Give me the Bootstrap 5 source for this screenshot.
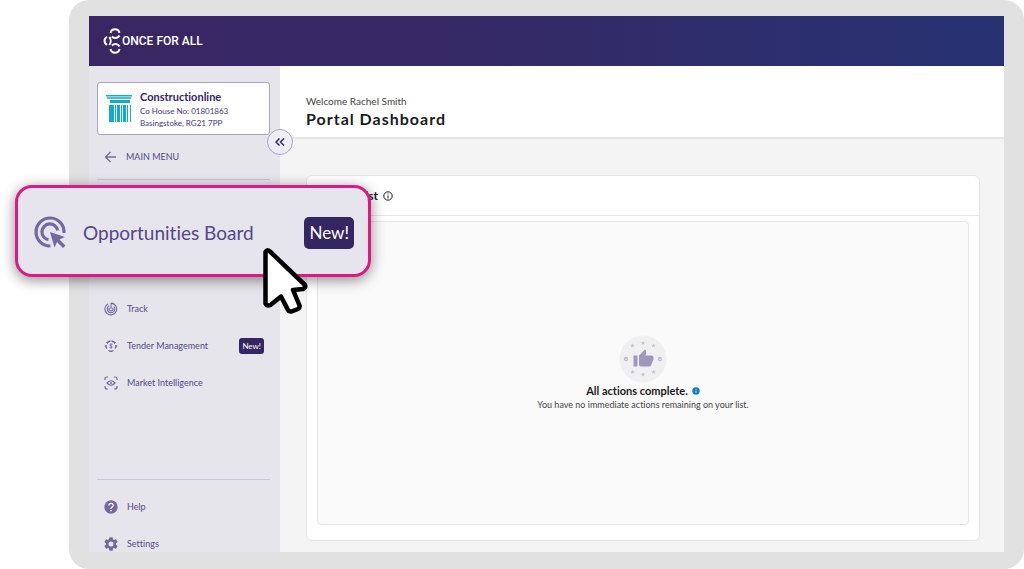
<!DOCTYPE html>
<html lang="en">
<head>
<meta charset="utf-8">
<meta name="viewport" content="width=device-width, initial-scale=1">
<title>Portal Dashboard</title>
<link href="https://cdn.jsdelivr.net/npm/bootstrap@5.3.0/dist/css/bootstrap.min.css" rel="stylesheet">
<style>
  :root { --ink: #352562; --violet: #55478a; --icon: #7568a0; --line: #e5e5e6; }
  body { font-family: Lato, "Open Sans", sans-serif; font-size: 10px; line-height: 12px; background: #fff; font-variant-ligatures: none; }
  svg { display: block; flex: none; }
  .stage { min-height: 100vh; padding-left: 69px; }
  .frame { background: #e1e1e1; border-radius: 20px; padding: 16px 20px 17px; }
  .topbar { height: 50px; padding-left: 12px; gap: 1px; background: linear-gradient(90deg, #392663, #352965 40%, #273273); }
  .logo-text { font: 500 12px/16px Roboto, sans-serif; color: #fff; }
  .side { width: 191px; background: #e6e5ec; padding: 16px 10px 0 8px; color: var(--violet); font-size: 9px; }
  .side a { color: var(--violet); text-decoration: none; }
  .company { height: 53px; background: #fff; border: 1px solid #aaa3c9; border-radius: 3px; padding-left: 8px; gap: 8px; color: var(--ink); }
  .company h2 { font-size: 11px; line-height: 16px; font-weight: 700; margin: 0; }
  .company p { font-size: 8px; line-height: 12px; margin: 0; color: #44347a; }
  .back { height: 44px; padding-left: 7px; gap: 9px; }
  .rule { border-top: 1px solid #c9c5da; }
  .menu a { height: 37px; padding: 0 6px 0 7px; gap: 9px; }
  .menu-main { margin-top: 110px; }
  .menu-foot { margin-bottom: -10px; }
  .tag { background: var(--ink); color: #fff; border-radius: 3px; font-size: 8px; line-height: 16px; padding: 0 3px; }
  .collapse-btn { width: 26px; height: 26px; left: -13px; bottom: -18px; border: 1px solid #aaa3c9; border-radius: 50%; background: #eeedf3; color: var(--ink); padding: 0; z-index: 2; }
  .page { background: #f4f4f4; }
  .page-head { height: 73px; background: #fff; border-bottom: 2px solid var(--line); padding: 29px 26px 0; }
  .page-head p { margin: 0; line-height: 12px; color: #444; }
  .page-head h1 { font-size: 16px; line-height: 24px; font-weight: 700; letter-spacing: 1px; color: #1b1b1b; margin: 0; }
  .panel { margin: 36px 24px 11px 26px; background: #fff; border: 1px solid var(--line); border-radius: 6px; }
  .panel-head { height: 40px; border-bottom: 1px solid var(--line); padding-left: 14px; gap: 5px; color: #1b1b1b; }
  .panel-head h2 { font-size: 12px; line-height: 16px; font-weight: 700; margin: 0; }
  .empty { margin: 5px 10px 15px; background: #fafafa; border: 1px solid var(--line); border-radius: 4px; }
  .empty h3 { font-size: 11px; line-height: 16px; font-weight: 700; margin: 0; color: #1b1b1b; }
  .empty p { font-size: 9px; line-height: 12px; margin: 0; color: #444; }
  .callout { left: 15px; top: 185px; width: 356px; height: 92px; border: 3px solid #dc1a84; border-radius: 17px; background: #e6e5ed; box-shadow: 0 3px 14px rgba(0,0,0,.45); padding: 3px 14px 0 16px; z-index: 3; text-decoration: none; }
  .callout .title { font-size: 19px; line-height: 28px; color: #55478a; padding-left: 16px; }
  .callout .new { background: var(--ink); color: #fff; font-size: 17px; line-height: 32px; border-radius: 5px; padding: 0 5px; }
  .pointer { left: 259px; top: 244px; z-index: 4; }
</style>
</head>
<body>
<div class="stage position-relative d-flex">
  <div class="frame flex-grow-1 d-flex flex-column">
    <header class="topbar d-flex align-items-center">
      <svg width="20" height="28" viewBox="0 0 20 28" fill="none" stroke="#fff" stroke-width="2">
        <path d="M9.500 6A4.600 4.600 0 0 1 18.500 6M18.500 8.500A4.600 4.600 0 0 1 11 9.500"/>
        <path d="M6 9.800A4.500 4.500 0 0 0 6 17.800M8.300 10A6 6 0 0 1 8.300 17.800"/>
        <path d="M11 18.500A4.600 4.600 0 0 1 18.500 19.500M18.500 22A4.600 4.600 0 0 1 9.500 22"/>
      </svg>
      <span class="logo-text">ONCE FOR ALL</span>
    </header>
    <div class="d-flex flex-grow-1">
      <aside class="side d-flex flex-column flex-shrink-0">
        <div class="company d-flex align-items-center">
          <svg width="26" height="28" viewBox="0 0 26 28" fill="#10adc9">
            <path d="M0 0h26v1.500H0zM1 2.300h24v1.500H1zM4 5h20v3H4zM3 10h5v17H3zM9 10h1v17H9zM11 10h3v17h-3zM15 10h1v17h-1zM17 10h3v17h-3zM21 10h1v17h-1zM24 10h1v17h-1z"/>
          </svg>
          <div>
            <h2>Constructionline</h2>
            <p>Co House No: 01801863</p>
            <p>Basingstoke, RG21 7PP</p>
          </div>
        </div>
        <a href="#" class="back d-flex align-items-center">
          <svg width="13" height="12" viewBox="0 0 13 12" fill="none" stroke="#7568a0" stroke-width="1.300"><path d="M12 6H2M6.500 1 1.500 6l5 5"/></svg>
          MAIN MENU
        </a>
        <div class="rule"></div>
        <nav class="menu menu-main">
          <a href="#" class="d-flex align-items-center">
            <svg width="14" height="14" viewBox="0 0 14 14" fill="none" stroke="#7568a0" stroke-width="1.100"><path d="M4 1.800A5.900 5.900 0 1 0 7 1.100a5.900 5.900 0 0 1 3 .7M10 4.500A3.800 3.800 0 1 1 5 3.700M7 1v6M8.500 5.800A1.900 1.900 0 1 1 5.500 5.800"/></svg>
            Track
          </a>
          <a href="#" class="d-flex align-items-center">
            <svg width="14" height="14" viewBox="0 0 14 14" fill="none" stroke="#7568a0"><path d="M3 3.800A5 5 0 0 1 6 2.300M8 2.300a5 5 0 0 1 3 1.500M12 6a5 5 0 0 1-.8 3.500M9.500 11.500a5 5 0 0 1-5 0M2.800 9.500A5 5 0 0 1 2 6" stroke-width="1.400"/><path d="M.5 7h2M11.500 7h2M5.500 2h3M5.500 12.500h3M2 3l2 2M12 3l-2 2M8.500 5.500C7.500 4.800 5.800 5 5.800 6s2.500 1 2.500 2-1.800 1.200-2.800.5M7 4.500v5" stroke-width=".8"/></svg>
            Tender Management
            <span class="tag ms-auto">New!</span>
          </a>
          <a href="#" class="d-flex align-items-center">
            <svg width="14" height="14" viewBox="0 0 14 14" fill="none" stroke="#7568a0" stroke-width="1.200"><path d="M1 4V3q0-2 2-2h1M10 1h1q2 0 2 2v1M13 10v1q0 2-2 2h-1M4 13H3q-2 0-2-2v-1"/><path d="M3 7q4-4.500 8 0-4 4.500-8 0z"/><circle cx="7" cy="7" r="1" fill="#7568a0" stroke="none"/></svg>
            Market Intelligence
          </a>
        </nav>
        <nav class="menu menu-foot mt-auto">
          <div class="rule mb-2"></div>
          <a href="#" class="d-flex align-items-center">
            <svg width="14" height="14" viewBox="0 0 14 14"><circle cx="7" cy="7" r="6.700" fill="#7568a0"/><path d="M4.800 5.500Q4.900 3.300 7 3.300T9.200 5.300Q9.200 6.400 8 7.100T7 8.800" fill="none" stroke="#fff" stroke-width="1.300"/><circle cx="7" cy="10.700" r=".8" fill="#fff"/></svg>
            Help
          </a>
          <a href="#" class="d-flex align-items-center">
            <svg width="14" height="14" viewBox="2 2 20 20" fill="#7568a0"><path d="M19.140 12.940c.04-.3.060-.610.060-.940s-.020-.640-.070-.940l2.030-1.580a.49.49 0 0 0 .12-.610l-1.920-3.320a.49.49 0 0 0-.59-.220l-2.390.960a7 7 0 0 0-1.620-.940l-.360-2.540A.48.480 0 0 0 13.920 2.400h-3.840a.47.470 0 0 0-.47.410l-.360 2.540a7 7 0 0 0-1.620.940l-2.390-.960a.47.470 0 0 0-.59.220L2.740 8.870a.47.470 0 0 0 .12.610l2.030 1.580a6 6 0 0 0-.020 1.880l-2.030 1.580a.49.490 0 0 0-.12.610l1.920 3.320c.12.220.37.290.59.220l2.390-.960c.5.380 1.030.700 1.620.940l.360 2.540c.05.240.24.410.48.410h3.840c.24 0 .44-.170.470-.410l.360-2.540a7 7 0 0 0 1.620-.940l2.390.960c.22.080.47 0 .59-.220l1.920-3.320a.47.470 0 0 0-.12-.610zM12 15.600a3.600 3.600 0 1 1 0-7.200 3.600 3.600 0 0 1 0 7.200z"/></svg>
            Settings
          </a>
        </nav>
      </aside>
      <main class="page flex-grow-1 d-flex flex-column">
        <div class="page-head position-relative">
          <p>Welcome Rachel Smith</p>
          <h1>Portal Dashboard</h1>
          <button type="button" class="collapse-btn position-absolute d-flex align-items-center justify-content-center" aria-label="Collapse menu">
            <svg width="10" height="8" viewBox="0 0 10 8" fill="none" stroke="currentColor" stroke-width="1.500"><path d="M4.500.5 1 4l3.500 3.500M9 .5 5.500 4 9 7.500"/></svg>
          </button>
        </div>
        <section class="panel flex-grow-1 d-flex flex-column">
          <div class="panel-head d-flex align-items-center">
            <h2>Action List</h2>
            <svg width="10" height="10" viewBox="0 0 10 10" fill="none" stroke="#1b1b1b"><circle cx="5" cy="5" r="4.200"/><path d="M5 4.500V7.500M5 2.500v1"/></svg>
          </div>
          <div class="empty flex-grow-1 d-flex flex-column align-items-center justify-content-center">
            <svg width="48" height="48" viewBox="0 0 48 48">
              <circle cx="24" cy="24" r="23.500" fill="#f0eff2"/>
              <g fill="#a097bf">
                <path d="M14.500 20.500h4v11h-4zM20 20.500 26 14.500q1.500 1 1.300 2.500l-.8 3.500h6q2 0 2 2v2l-2.500 6q-.5 1-2 1H22q-2 0-2-2z"/>
              </g>
              <defs><path id="star" d="M0-2.200.6-.7 2.200-.7 1 .4 1.400 2 0 1.100-1.400 2-1 .4-2.200-.7-.6-.7z" fill="#c6c0d8"/></defs>
              <use href="#star" x="24" y="8"/><use href="#star" x="13.500" y="10.500"/><use href="#star" x="34.500" y="10.500"/>
              <use href="#star" x="24" y="39.500"/><use href="#star" x="13.500" y="37"/><use href="#star" x="34.500" y="37"/>
              <g fill="#c0b9d6"><circle cx="7" cy="24" r="2.200"/><circle cx="41" cy="24" r="2.200"/></g>
              <path d="m6 24 1 1 1.500-2M40 24l1 1 1.500-2" fill="none" stroke="#f0eff2" stroke-width=".7"/>
            </svg>
            <div class="d-flex align-items-center gap-1">
              <h3>All actions complete.</h3>
              <svg width="8" height="8" viewBox="0 0 8 8"><circle cx="4" cy="4" r="3.700" fill="#087fc1"/><path d="M4 3.500V6M4 1.800v1" stroke="#fff" stroke-width=".8"/></svg>
            </div>
            <p>You have no immediate actions remaining on your list.</p>
          </div>
        </section>
      </main>
    </div>
  </div>

  <a href="#" class="callout position-absolute d-flex align-items-center">
    <svg width="33" height="33" viewBox="0 0 33 33" fill="none" stroke="#7568a0" stroke-width="3.200">
      <path d="M16.500 30A14 14 0 1 1 30 17"/>
      <path d="M14.500 23.800A8 8 0 1 1 23.800 14.500"/>
      <path d="m16 16 15 5-5.500 2.500 6 6-2.500 2.500-6-6-2.500 5.500z" fill="#7568a0" stroke="none"/>
    </svg>
    <span class="title">Opportunities Board</span>
    <span class="new ms-auto">New!</span>
  </a>
  <svg class="pointer position-absolute" width="52" height="74" viewBox="0 0 52 74" fill="#fff" stroke="#000" stroke-width="4.500" stroke-linejoin="round">
    <path d="M6.500 8Q8 5 11 7.500L46 41Q47 44 44 45L34 46 40.500 61.500Q41 64 39 65L32.500 67.500Q30 68 29 66L22 52.500 11.500 61Q8 62.500 6.500 59.500z"/>
  </svg>
</div>
<script src="https://cdn.jsdelivr.net/npm/bootstrap@5.3.0/dist/js/bootstrap.bundle.min.js"></script>
</body>
</html>
